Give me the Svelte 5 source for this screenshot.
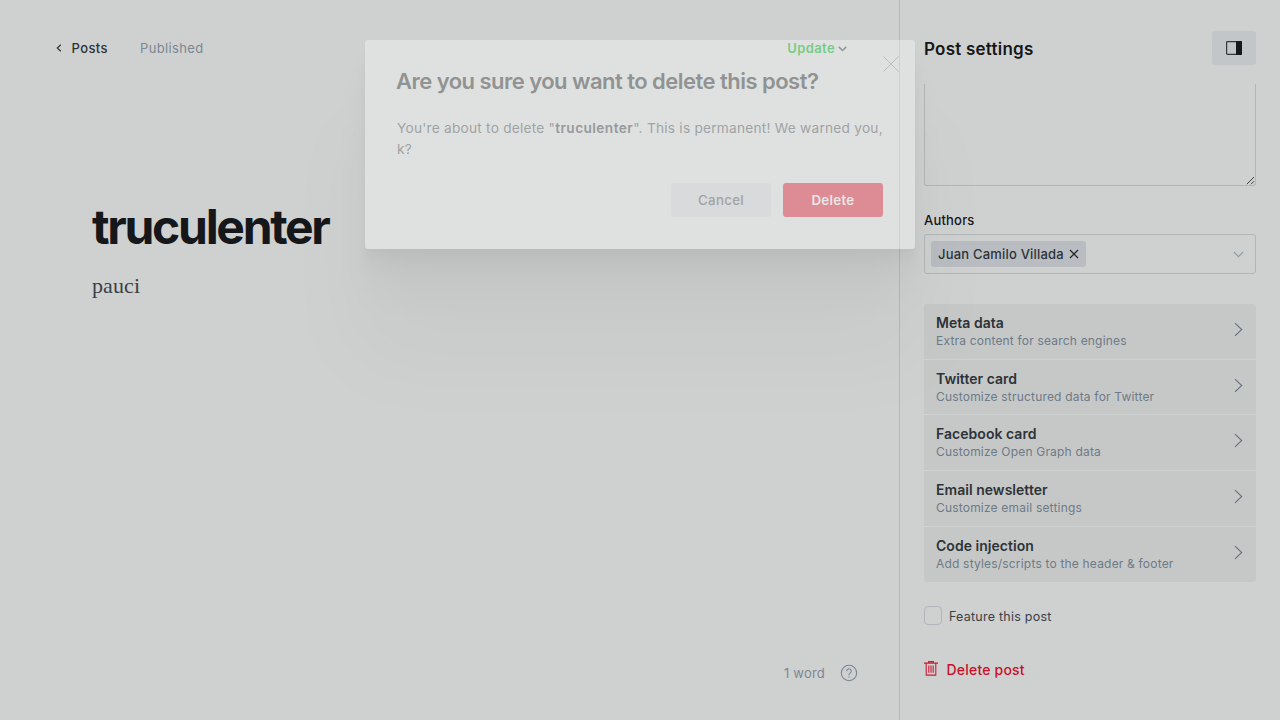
<script>
  const sections = [
    ['Meta data', 'Extra content for search engines'],
    ['Twitter card', 'Customize structured data for Twitter'],
    ['Facebook card', 'Customize Open Graph data'],
    ['Email newsletter', 'Customize email settings'],
    ['Code injection', 'Add styles/scripts to the header & footer']
  ];
</script>

<div class="app">
  <main class="editor">
    <header class="toolbar">
      <a class="back" href="#posts">
        <svg width="6" height="8" viewBox="0 0 6 8"><path d="M4.8 .7 1.3 4l3.5 3.3" fill="none" stroke="#2b3136" stroke-width="1.2" /></svg>
        <span>Posts</span>
      </a>
      <span class="status">Published</span>
      <button class="update">
        <span>Update</span>
        <svg width="9" height="6" viewBox="0 0 9 6"><path d="M.8 .9 4.5 4.5 8.2 .9" fill="none" stroke="#5c6164" stroke-width="1.6" /></svg>
      </button>
    </header>
    <article>
      <h1>truculenter</h1>
      <p>pauci</p>
    </article>
    <footer>
      <span>1 word</span>
      <svg width="18" height="18" viewBox="0 0 18 18" fill="none" stroke="#7b8794">
        <circle cx="9" cy="9" r="7.7" stroke-width="1.1" />
        <path d="M6.7 7.2a2.3 2.3 0 1 1 3.5 1.9c-.8.5-1.2.8-1.2 1.7v.4" stroke-width="1.1" />
        <circle cx="9" cy="13" r=".65" fill="#7b8794" stroke="none" />
      </svg>
    </footer>
  </main>

  <aside>
    <header class="side-head">
      <h2>Post settings</h2>
      <button class="toggle" aria-label="Toggle settings">
        <svg width="16" height="14" viewBox="0 0 16 14"><rect x=".6" y=".6" width="14.8" height="12.8" rx=".8" fill="none" stroke="#33383a" stroke-width="1.2" /><path d="M10 0h5a1 1 0 0 1 1 1v12a1 1 0 0 1-1 1h-5z" fill="#15171a" /></svg>
      </button>
    </header>
    <div class="excerpt">
      <svg width="9" height="9" viewBox="0 0 9 9"><path d="M.8 8.2 8 1M5 8.2 8 5.2" stroke="#3c3e3f" fill="none" /></svg>
    </div>
    <div class="label">Authors</div>
    <div class="select">
      <span class="token">Juan Camilo Villada
        <svg width="10" height="10" viewBox="0 0 10 10"><path d="m1 1 8 8M9 1 1 9" stroke="#23282c" stroke-width="1.3" /></svg>
      </span>
      <svg width="11" height="7" viewBox="0 0 11 7"><path d="m.8.8 4.7 4.9L10.2.8" fill="none" stroke="#8f98a1" stroke-width="1.1" /></svg>
    </div>
    <nav>
      {#each sections as [title, detail]}
        <button class="row">
          <span class="copy"><b>{title}</b><small>{detail}</small></span>
          <svg width="9" height="15" viewBox="0 0 9 15"><path d="m1 1.1 6.7 6.4L1 13.9" fill="none" stroke="#67737f" stroke-width="1.15" /></svg>
        </button>
      {/each}
    </nav>
    <label class="feature"><span class="box"></span><span class="feature-text">Feature this post</span></label>
    <button class="remove">
      <svg width="14" height="15" viewBox="0 0 14 15" fill="none" stroke="#ca1c35" stroke-width="1.1">
        <path d="M0 2.1h14M4.6 2V.6h4.8V2M2.2 2.2v11.9h9.6V2.2M4.8 4.5v7.2M7 4.5v7.2M9.2 4.5v7.2" />
      </svg>
      <span>Delete post</span>
    </button>
  </aside>

  <div class="shade"></div>
  <section class="modal">
    <h3>Are you sure you want to delete this post?</h3>
    <svg class="close" width="16" height="16" viewBox="0 0 16 16"><path d="m.4.4 15.2 15.2M15.6.4.4 15.6" stroke="#babdbd" stroke-width="1" /></svg>
    <p>You're about to delete "<strong>truculenter</strong>". This is permanent! We warned you, k?</p>
    <div class="actions">
      <button class="cancel">Cancel</button>
      <button class="danger">Delete</button>
    </div>
  </section>
</div>

<style>
  :global(body) { margin: 0; overflow: hidden; }
  * { box-sizing: border-box; }
  .app {
    position: relative;
    display: flex;
    width: 1280px;
    height: 720px;
    overflow: hidden;
    background: #cfd1d0;
    color: #15171a;
    font-family: Inter, sans-serif;
    letter-spacing: .2px;
  }
  button { border: 0; background: none; padding: 0; font: inherit; letter-spacing: inherit; }
  h1, h2, h3, p { margin: 0; }
  svg { display: block; flex: none; }
  .editor { width: 899px; display: flex; flex-direction: column; }
  .toolbar { display: flex; align-items: center; height: 96px; padding: 0 52px 0 56px; font-size: 13px; }
  .back { display: flex; align-items: center; gap: 9.5px; width: 84px; color: #2b3136; text-decoration: none; font-weight: 500; letter-spacing: .4px; }
  .status { color: #7b8794; letter-spacing: .35px; }
  .update { display: flex; align-items: center; gap: 3px; margin-left: auto; color: #30b141; font-weight: 600; letter-spacing: .4px; }
  .update svg { margin-top: 2px; }
  article { padding: 102px 92px 0; flex: 1; }
  h1 { font-size: 48px; line-height: 58px; font-weight: 700; letter-spacing: -2.3px; }
  article p { margin-top: 14px; font: 22px/32px "Liberation Serif", serif; color: #394047; letter-spacing: .1px; }
  footer { display: flex; align-items: center; justify-content: flex-end; gap: 15px; height: 94px; padding-right: 41px; color: #7b8794; font-size: 13px; }
  aside { width: 381px; border-left: 1px solid #b6b9ba; padding: 0 24px; display: flex; flex-direction: column; }
  .side-head { height: 84px; flex: none; display: flex; justify-content: space-between; align-items: flex-start; padding-top: 31px; }
  h2 { font-size: 17px; line-height: 36px; font-weight: 600; letter-spacing: .23px; }
  .toggle { width: 44px; height: 34px; border-radius: 3px; background: #c2c6c8; display: grid; place-items: center; }
  .excerpt { height: 102.4px; flex: none; display: flex; align-items: flex-end; justify-content: flex-end; border: 1px solid #b3b6b7; border-top: 0; border-radius: 0 0 3px 3px; }
  .label { margin-top: 23.6px; font-size: 13px; line-height: 20px; font-weight: 500; }
  .select { margin-top: 4.4px; height: 39.6px; flex: none; border: 1px solid #b3b6b7; border-radius: 3px; padding: 0 11px 0 6px; display: flex; justify-content: space-between; align-items: center; }
  .token { height: 26px; padding: 0 7px; display: flex; align-items: center; gap: 5px; border-radius: 3px; background: #b9bdc1; color: #2d3338; font-size: 13px; font-weight: 500; letter-spacing: .2px; }
  nav { margin-top: 30px; height: 278px; flex: none; border-radius: 3px; background: #c6c8c7; display: flex; flex-direction: column; }
  .row { flex: none; height: 55.75px; display: flex; justify-content: space-between; align-items: center; padding: 0 13px 4px 12px; text-align: left; border-bottom: 1px solid #d0d2d1; }
  .row:last-child { height: 55px; border-bottom: 0; }
  .copy { display: flex; flex-direction: column; padding-top: 5px; }
  b { font-size: 14px; line-height: 18px; font-weight: 600; color: #2d3338; letter-spacing: .03px; }
  small { font-size: 12px; line-height: 18px; color: #6d7a87; letter-spacing: .19px; }
  .feature { display: flex; align-items: center; gap: 7px; margin-top: 23.4px; height: 20px; color: #394047; font-size: 12.5px; letter-spacing: .24px; }
  .feature-text { padding-top: 2px; }
  .box { width: 18px; height: 19px; border: 1px solid #b2b5ba; border-radius: 4px; }
  .remove { display: flex; align-items: center; gap: 8.5px; margin-top: 34px; height: 20px; color: #ca0f2b; font-size: 14px; font-weight: 500; }
  .remove svg { margin-top: -1px; }

  .shade, .modal { position: absolute; left: 365px; top: 40px; width: 550px; height: 209px; border-radius: 3px; }
  .shade {
    opacity: .43;
    box-shadow: 0 2.8px 2.2px rgba(0,0,0,.02), 0 6.7px 5.3px rgba(0,0,0,.028), 0 12.5px 10px rgba(0,0,0,.035), 0 22.3px 17.9px rgba(0,0,0,.042), 0 41.8px 33.4px rgba(0,0,0,.05), 0 100px 80px rgba(0,0,0,.07);
  }
  .modal { background: rgba(253,255,254,.35); padding: 26px 32px 0; }
  h3 { margin-left: -1px; font-size: 22px; line-height: 30px; font-weight: 600; color: #919393; letter-spacing: -.53px; }
  .close { position: absolute; right: 16px; top: 16px; }
  .modal p { margin-top: 22px; margin-right: -4px; font-size: 13.7px; line-height: 21px; color: #a0a3a5; letter-spacing: .23px; }
  strong { font-weight: 600; color: #97999c; letter-spacing: .42px; }
  .actions { display: flex; justify-content: flex-end; gap: 12px; margin-top: 23px; }
  .actions button { width: 100px; height: 34px; border-radius: 3px; font-size: 13.3px; font-weight: 500; letter-spacing: .3px; }
  .actions .cancel { background: #d8dadb; color: #a1a4a6; }
  .actions .danger { background: #dd8c95; color: #e9e6e6; font-weight: 600; }
</style>
